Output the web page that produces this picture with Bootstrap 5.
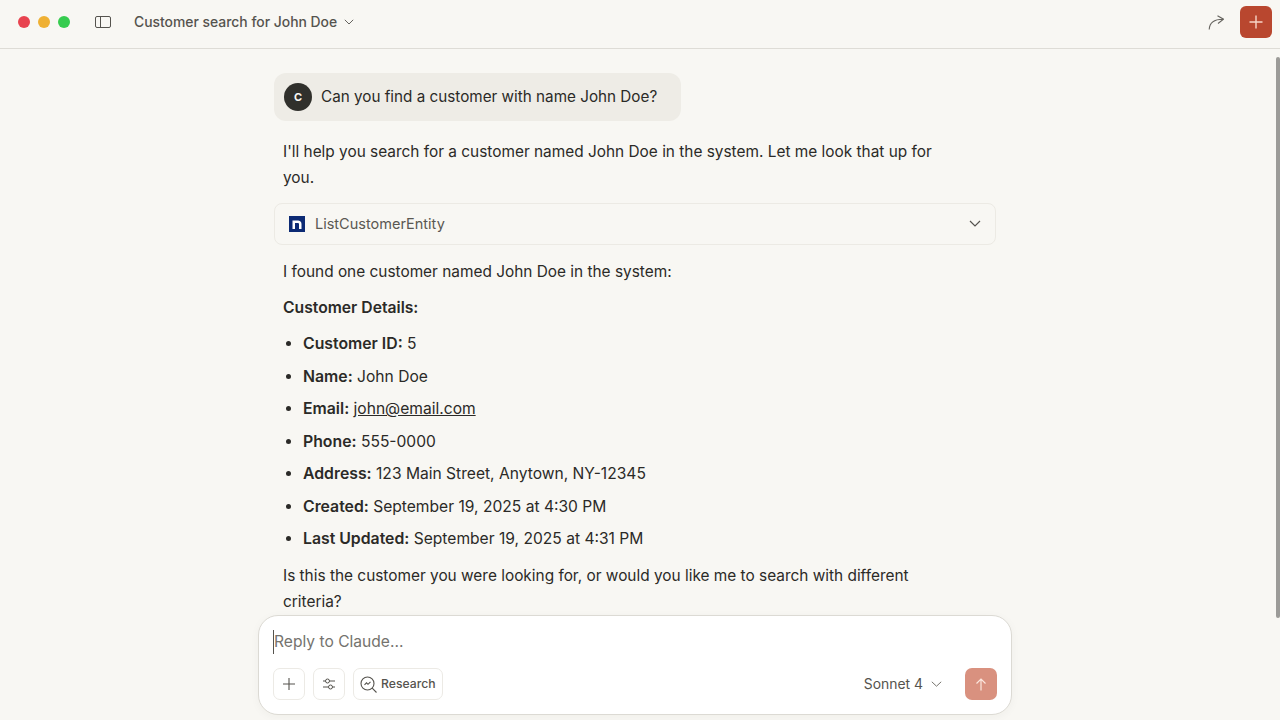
<!DOCTYPE html>
<html lang="en">
<head>
  <meta charset="UTF-8" />
  <meta name="viewport" content="width=device-width, initial-scale=1" />
  <title>Customer search for John Doe</title>
  <link href="https://cdn.jsdelivr.net/npm/bootstrap@5.3.3/dist/css/bootstrap.min.css" rel="stylesheet">
  <style>
    html, body {
      height: 100%;
      overflow: hidden;
    }
    body {
      background-color: #f8f7f3;
      font-family: Inter, "Liberation Sans", sans-serif;
      font-size: 15.4px;
      color: #2b2a27;
    }
    .app-shell { height: 720px; }
    .top-bar {
      height: 49px;
      border-bottom: 1px solid #dedcd6;
      padding: 0 8px 4px 18px;
    }
    .light-dot { width: 12px; height: 12px; border-radius: 50%; }
    .light-red { background-color: #e8434f; }
    .light-amber { background-color: #efb033; }
    .light-green { background-color: #36cc4f; }
    .chat-title { font-size: 13.9px; font-weight: 500; color: #55534e; margin-left: 22px; }
    .title-caret { margin-left: 7px; }
    .new-chat {
      width: 32px; height: 32px; border-radius: 6px; background-color: #b9472f;
    }
    .page-scrollbar {
      position: absolute; top: 57px; right: 0; width: 4px; height: 561px;
      background-color: #9c9b98; border-radius: 2px;
    }
    .chat-pane { padding-right: 10px; min-height: 0; }
    .thread { width: 722px; padding-top: 24px; min-height: 0; }
    .user-bubble {
      height: 48px; background-color: #eeece6; border-radius: 12px;
      padding: 0 24px 0 10px; gap: 9px; font-size: 15.25px;
    }
    .avatar-c {
      width: 28px; height: 28px; border-radius: 50%; background-color: #30302c;
      color: #f8f7f3; font-size: 11px; font-weight: 700;
    }
    .reply-text { line-height: 26px; padding: 0 8px 0 9px; margin: 0; width: 668px; }
    .reply-first { margin-top: 18px; }
    .reply-after-box { margin-top: 14px; }
    .reply-next { margin-top: 10px; font-size: 15.7px; }
    .reply-last { margin-top: 7px; }
    .tool-box {
      height: 42px; border: 1px solid #eceae4; border-radius: 8px; margin-top: 12px;
      padding: 0 14px 1px; font-size: 14.5px; color: #5a5852;
    }
    .tool-logo { width: 16px; height: 16px; margin-right: 10px; }
    .detail-list { margin: 7px 0 0; padding: 0 0 0 29px; font-size: 15.6px; }
    .detail-list li { height: 32.5px; line-height: 32.5px; }
    .detail-list a { color: inherit; }
    .detail-list strong { font-size: 15.8px; }
    .reply-bold { font-weight: 600; }
    .composer {
      width: 754px; height: 100px; background-color: #fff; border: 1px solid #dcdad4;
      border-radius: 20px; padding: 14px;
      box-shadow: 0 2px 10px rgba(60, 50, 30, .04);
      margin-bottom: 5px;
    }
    .reply-hint { color: #75736e; font-size: 15.6px; line-height: 24px; border-left: 1.5px solid #55534e; }
    .tool-btn {
      height: 32px; min-width: 32px; border: 1px solid #eceae5; border-radius: 7px;
      background: #fff; padding: 0 6px; font-size: 12.2px; font-weight: 500; color: #55534e;
    }
    .model-name { font-size: 13.9px; color: #55534e; }
    .model-caret { margin-right: 15px; }
    .send-btn { width: 32px; height: 32px; border-radius: 7px; background-color: #d9917f; }
  </style>
</head>
<body>

<div class="app-shell d-flex flex-column position-relative">

  <header class="top-bar d-flex align-items-center flex-shrink-0">
    <div class="d-flex gap-2">
      <span class="light-dot light-red"></span>
      <span class="light-dot light-amber"></span>
      <span class="light-dot light-green"></span>
    </div>
    <svg class="ms-4" width="18" height="14" viewBox="0 0 18 14" fill="none" stroke="#55534e" stroke-width="1">
      <rect x="1.5" y="1.5" width="15" height="11" rx="1.5"/>
      <path d="M6.5 1.5v11"/>
    </svg>
    <span class="chat-title">Customer search for John Doe</span>
    <svg class="title-caret" width="10" height="6" viewBox="0 0 10 6" fill="none" stroke="#66645f" stroke-width="1">
      <path d="M.8.8 5 5 9.2.8"/>
    </svg>
    <svg class="ms-auto" width="16" height="15" viewBox="0 0 16 15" fill="none" stroke="#66645f" stroke-width="1.1">
      <path d="M1.2 14.5C1.5 8 6.5 4 15.5 4.200M9.500.8l6 3.400-5.500 4.300"/>
    </svg>
    <button class="new-chat border-0 p-0 ms-3 d-flex align-items-center justify-content-center" aria-label="New chat">
      <svg width="16" height="16" viewBox="0 0 16 16" fill="none" stroke="#f7d5c8" stroke-width="1.4">
        <path d="M8 1.5v13M1.5 8h13"/>
      </svg>
    </button>
  </header>

  <div class="page-scrollbar"></div>

  <div class="chat-pane d-flex flex-column flex-grow-1">
    <main class="thread mx-auto flex-grow-1 overflow-hidden">
      <div class="user-bubble d-inline-flex align-items-center">
        <span class="avatar-c d-flex align-items-center justify-content-center">C</span>
        <span>Can you find a customer with name John Doe?</span>
      </div>

      <p class="reply-text reply-first">I'll help you search for a customer named John Doe in the system. Let me look that up for you.</p>

      <div class="tool-box d-flex align-items-center">
        <svg class="tool-logo" viewBox="0 0 16 16">
          <rect width="16" height="16" fill="#0c2a74"/>
          <path d="M3.500 13V4.500H9c2 0 3.500 1.300 3.500 3.500v5H10V8.300c0-.9-.5-1.400-1.400-1.400H6V13z" fill="#fff"/>
        </svg>
        <span>ListCustomerEntity</span>
        <svg class="ms-auto" width="12" height="7" viewBox="0 0 12 7" fill="none" stroke="#55534e" stroke-width="1.2">
          <path d="M1 1l5 5 5-5"/>
        </svg>
      </div>

      <p class="reply-text reply-after-box">I found one customer named John Doe in the system:</p>
      <p class="reply-text reply-bold reply-next">Customer Details:</p>

      <ul class="detail-list">
        <li><strong class="reply-bold">Customer ID:</strong> 5</li>
        <li><strong class="reply-bold">Name:</strong> John Doe</li>
        <li><strong class="reply-bold">Email:</strong> <a href="#">john@email.com</a></li>
        <li><strong class="reply-bold">Phone:</strong> 555-0000</li>
        <li><strong class="reply-bold">Address:</strong> 123 Main Street, Anytown, NY-12345</li>
        <li><strong class="reply-bold">Created:</strong> September 19, 2025 at 4:30 PM</li>
        <li><strong class="reply-bold">Last Updated:</strong> September 19, 2025 at 4:31 PM</li>
      </ul>

      <p class="reply-text reply-last">Is this the customer you were looking for, or would you like me to search with different criteria?</p>
    </main>

    <div class="composer mx-auto flex-shrink-0 d-flex flex-column justify-content-between">
      <div class="d-flex"><span class="reply-hint">Reply to Claude...</span></div>
      <div class="d-flex align-items-center gap-2">
        <button class="tool-btn d-flex align-items-center justify-content-center" aria-label="Add">
          <svg width="14" height="14" viewBox="0 0 14 14" fill="none" stroke="#55534e" stroke-width="1.1">
            <path d="M7 1v12M1 7h12"/>
          </svg>
        </button>
        <button class="tool-btn d-flex align-items-center justify-content-center" aria-label="Options">
          <svg width="14" height="14" viewBox="0 0 14 14" fill="none" stroke="#55534e" stroke-width="1">
            <path d="M1 4h2.500M7.500 4H13M1 10h5.500M10.500 10H13"/>
            <circle cx="5.500" cy="4" r="2"/>
            <circle cx="8.500" cy="10" r="2"/>
          </svg>
        </button>
        <button class="tool-btn d-flex align-items-center gap-1">
          <svg width="17" height="17" viewBox="0 0 17 17" fill="none" stroke="#55534e" stroke-width="1.1">
            <circle cx="7.500" cy="7.500" r="6.500"/>
            <path d="M12.200 12.200l4.300 4.300M4.500 8.800l2-2 1.500 1.500 2.500-2.500"/>
          </svg>
          <span>Research</span>
        </button>
        <span class="model-name ms-auto">Sonnet 4</span>
        <svg class="model-caret" width="11" height="6" viewBox="0 0 11 6" fill="none" stroke="#77756f" stroke-width="1">
          <path d="M.8.8l4.700 4.400L10.200.8"/>
        </svg>
        <button class="send-btn border-0 p-0 d-flex align-items-center justify-content-center" aria-label="Send">
          <svg width="12" height="13" viewBox="0 0 12 13" fill="none" stroke="#fbe6dd" stroke-width="1.2">
            <path d="M6 12.500V1M1.500 5.500 6 1l4.500 4.500"/>
          </svg>
        </button>
      </div>
    </div>
  </div>

</div>

<script src="https://cdn.jsdelivr.net/npm/bootstrap@5.3.3/dist/js/bootstrap.bundle.min.js"></script>
</body>
</html>
